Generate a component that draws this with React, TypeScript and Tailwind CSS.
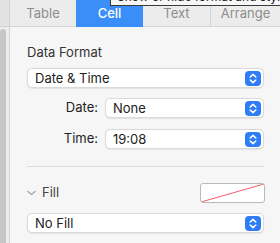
import React from "react";

const font = { fontFamily: "Inter, 'Liberation Sans', sans-serif" };

const Stepper: React.FC = () => (
  <div className="w-[16px] h-[15px] mr-[2px] rounded-[4px] bg-[#2f7df6] flex items-center justify-center">
    <svg width="16" height="15" viewBox="0 0 16 15" fill="none">
      <path d="M5.2 6 L8 3.4 L10.8 6" stroke="white" strokeWidth="1.5" strokeLinecap="round" strokeLinejoin="round" />
      <path d="M5.2 9 L8 11.6 L10.8 9" stroke="white" strokeWidth="1.5" strokeLinecap="round" strokeLinejoin="round" />
    </svg>
  </div>
);

interface SelectProps {
  value: string;
  className?: string;
}
const Select: React.FC<SelectProps> = ({ value, className = "" }) => (
  <div
    className={`h-[20px] flex items-center justify-between bg-white border border-[#dadada] rounded-[5px] shadow-[0_0.5px_1px_rgba(0,0,0,0.08)] ${className}`}
  >
    <span className="pl-[7px] text-[13px] leading-[16px] text-[#222]">{value}</span>
    <Stepper />
  </div>
);

const tabs = ["Table", "Cell", "Text", "Arrange"];

export default function App() {
  return (
    <div className="relative w-[280px] h-[243px] overflow-hidden flex bg-[#f6f6f6]" style={font}>
      {/* left scroll strip */}
      <div className="w-[10px] h-full flex flex-col border-r border-[#d4d4d4]">
        <div className="h-[27px] bg-[#e2e2e2] border-b border-[#d4d4d4]" />
        <div className="flex-1 flex bg-[#ececec] pt-[2px]">
          <div className="w-[6px] h-full bg-[#c6c6c6] rounded-t-[3px]" />
        </div>
      </div>

      <div className="flex-1 flex flex-col">
        {/* tabs */}
        <div className="h-[27px] flex bg-[#ececec] border-b border-[#d4d4d4]">
          {tabs.map((t, i) => (
            <div
              key={t}
              className={
                t === "Cell"
                  ? "w-[67px] h-[27px] -mb-px pt-px flex items-center justify-center bg-[#3a8ef7] text-white text-[13px] font-medium"
                  : i === 3
                  ? "flex-1 pt-px flex items-center justify-center text-[#8d8d8d] text-[13px] border-l border-[#d4d4d4]"
                  : i === 0
                  ? "w-[66px] pt-px flex items-center justify-center text-[#8d8d8d] text-[13px]"
                  : "w-[67px] pt-px flex items-center justify-center text-[#8d8d8d] text-[13px]"
              }
            >
              {t}
            </div>
          ))}
        </div>

        {/* panel */}
        <div className="pl-[17px] pr-[16px] pt-[17px] flex flex-col">
          <div className="text-[13px] leading-[16px] text-[#333]">Data Format</div>
          <Select value="Date & Time" className="mt-[8px]" />

          <div className="mt-[10px] flex items-center">
            <div className="w-[71px] text-right text-[13px] text-[#222]">Date:</div>
            <Select value="None" className="ml-[7px] flex-1" />
          </div>
          <div className="mt-[11px] flex items-center">
            <div className="w-[71px] text-right text-[13px] text-[#222]">Time:</div>
            <Select value="19:08" className="ml-[7px] flex-1" />
          </div>

          <div className="mt-[17px] h-px bg-[#dcdcdc]" />

          <div className="mt-[16px] flex items-center justify-between">
            <div className="flex items-center">
              <svg width="10" height="8" viewBox="0 0 10 8" fill="none" className="mr-[5px]">
                <path d="M1 2.5 L4.5 5.5 L8 2.5" stroke="#a8a8a8" strokeWidth="1.3" strokeLinecap="round" strokeLinejoin="round" />
              </svg>
              <span className="text-[13px] text-[#444]">Fill</span>
            </div>
            <div className="w-[65px] h-[20px] mr-[-1px] bg-white border border-[#b9b9b9] rounded-[3px] overflow-hidden">
              <svg width="63" height="18" viewBox="0 0 63 18">
                <line x1="0" y1="18" x2="63" y2="0" stroke="#f0596a" strokeWidth="1" />
              </svg>
            </div>
          </div>

          <Select value="No Fill" className="mt-[10px]" />
        </div>
      </div>

      {/* tooltip */}
      <div className="absolute left-[110px] top-[-11px] h-[17px] pl-[6px] pr-[10px] bg-[#f7f7f7] border border-[#3a3a3a] text-[12px] leading-[13px] text-[#222] whitespace-nowrap">
        Show or hide format and style options
      </div>
    </div>
  );
}
